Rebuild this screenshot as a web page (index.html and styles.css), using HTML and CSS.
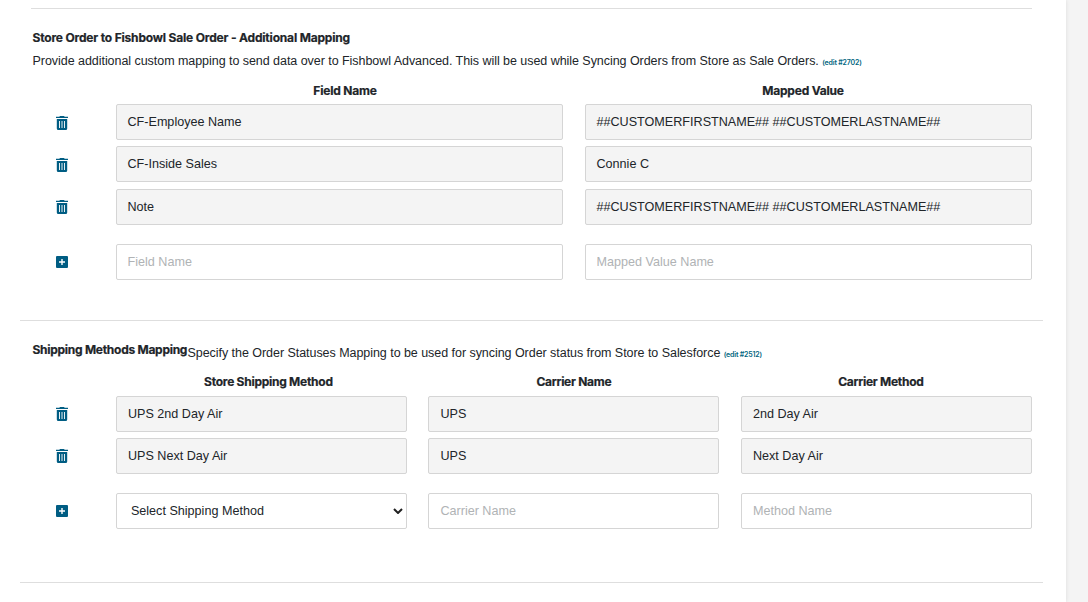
FILE: index.html
```html
<!DOCTYPE html>
<html lang="en">
<head>
<meta charset="utf-8">
<title>Mapping settings</title>
<link rel="stylesheet" href="styles.css">
</head>
<body>
<svg class="defs" width="0" height="0" aria-hidden="true">
  <symbol id="trash" viewBox="0 0 12 14">
    <path d="M4 0h4l.7.7H12V2H0V.7h3.300z"/>
    <path fill-rule="evenodd" d="M.8 3h10.400v9.500q0 1.500-1.500 1.500H2.300Q.8 14 .8 12.500zM3.100 5v7h.9V5zM5.550 5v7h.9V5zM8 5v7h.9V5z"/>
  </symbol>
  <symbol id="plus" viewBox="0 0 12 12">
    <path fill-rule="evenodd" d="M1 0h10q1 0 1 1v10q0 1-1 1H1q-1 0-1-1V1q0-1 1-1zM5.300 3v2.300H3v1.400h2.300V9h1.400V6.700H9V5.300H6.700V3z"/>
  </symbol>
</svg>
<main class="page">
  <section class="section order-section">
    <h2 class="title">Store Order to Fishbowl Sale Order - Additional Mapping</h2>
    <p class="description">Provide additional custom mapping to send data over to Fishbowl Advanced. This will be used while Syncing Orders from Store as Sale Orders. <a class="edit">(edit #2702)</a></p>
    <div class="row two head"><span></span><span class="nudge-right">Field Name</span><span class="nudge-left">Mapped Value</span></div>
    <div class="row two"><svg class="trash"><use href="#trash"/></svg><div class="field">CF-Employee Name</div><div class="field">##CUSTOMERFIRSTNAME## ##CUSTOMERLASTNAME##</div></div>
    <div class="row two"><svg class="trash"><use href="#trash"/></svg><div class="field">CF-Inside Sales</div><div class="field">Connie C</div></div>
    <div class="row two late"><svg class="trash"><use href="#trash"/></svg><div class="field">Note</div><div class="field">##CUSTOMERFIRSTNAME## ##CUSTOMERLASTNAME##</div></div>
    <div class="row two add"><svg class="plus"><use href="#plus"/></svg><input class="field" placeholder="Field Name"><input class="field" placeholder="Mapped Value Name"></div>
  </section>
  <section class="section shipping-section">
    <div class="intro"><h2 class="title">Shipping Methods Mapping</h2><p class="description">Specify the Order Statuses Mapping to be used for syncing Order status from Store to Salesforce <a class="edit">(edit #2512)</a></p></div>
    <div class="row three head"><span></span><span class="nudge-right">Store Shipping Method</span><span>Carrier Name</span><span class="nudge-left">Carrier Method</span></div>
    <div class="row three"><svg class="trash"><use href="#trash"/></svg><div class="field">UPS 2nd Day Air</div><div class="field">UPS</div><div class="field">2nd Day Air</div></div>
    <div class="row three"><svg class="trash"><use href="#trash"/></svg><div class="field">UPS Next Day Air</div><div class="field">UPS</div><div class="field">Next Day Air</div></div>
    <div class="row three add"><svg class="plus"><use href="#plus"/></svg><div class="field select">Select Shipping Method<svg class="chevron" viewBox="0 0 10 6"><path d="M1 1l4 4 4-4"/></svg></div><input class="field" placeholder="Carrier Name"><input class="field" placeholder="Method Name"></div>
  </section>
</main>
</body>
</html>
```
FILE: styles.css
```css
* { box-sizing: border-box; }
body {
  margin: 0;
  height: 602px;
  overflow: hidden;
  background: #f4f4f4;
  color: #212529;
  font-family: "Liberation Sans", Arial, sans-serif;
  font-size: 13px;
}
.defs { display: block; height: 0; }
.page {
  width: 1066px;
  height: 602px;
  padding: 8px 23px 0 20px;
  background: #fff;
  box-shadow: 0 0 4px rgba(0, 0, 0, .1);
}
.section { border-bottom: 1px solid #dedede; padding: 0 11px 0 12px; }
.order-section { height: 313px; }
.order-section::before {
  content: "";
  display: block;
  height: 1px;
  margin-left: -1px;
  background: #dedede;
}
.shipping-section { height: 262px; }
.title {
  margin: 0;
  padding-left: .5px;
  font: 700 12px/20px Inter, sans-serif;
  letter-spacing: -.18px;
  -webkit-text-stroke: .2px;
  white-space: nowrap;
}
.order-section .title { margin-top: 19px; }
.description {
  margin: 0;
  padding-left: .5px;
  font: 400 12.5px/20px "Liberation Sans", sans-serif;
  letter-spacing: -.045px;
  white-space: nowrap;
}
.order-section .description { margin-top: 3px; }
.edit { color: #006580; font: 600 7px/10px Inter, sans-serif; letter-spacing: -.18px; }
.intro { display: flex; padding-top: 19px; }
.intro .title { width: 155px; letter-spacing: -.27px; }
.intro .description { margin-top: 3px; }
.row { display: grid; align-items: center; height: 36px; margin-bottom: 6px; }
.two { grid-template-columns: 62px 447px 447px; column-gap: 22px; }
.three { grid-template-columns: 62.4px 291px 291px 291px; column-gap: 21.5px; }
.head {
  height: 20px;
  margin: 10px 0 3px;
  font: 700 12px/20px Inter, sans-serif;
  letter-spacing: -.2px;
  -webkit-text-stroke: .2px;
  text-align: center;
}
.shipping-section .head { margin: 9px 0 4px; letter-spacing: -.26px; }
.nudge-right { padding-left: 11px; }
.nudge-left { padding-right: 11px; }
.shipping-section .nudge-right { padding-left: 14px; }
.late { margin-top: 7px; }
.add { margin-top: 19px; }
.field {
  width: 100%;
  height: 36px;
  padding: 0 10.5px;
  border: 1px solid #d5d5d5;
  border-radius: 2px;
  background: #f4f4f4;
  color: #212529;
  font: 400 12.6px/35px "Liberation Sans", Arial, sans-serif;
  white-space: nowrap;
}
.three .field { padding-left: 11px; }
.add .field { background: #fff; }
input.field { outline: 0; padding-bottom: 0; }
.field::placeholder { color: #b0b3b5; opacity: 1; }
.trash, .plus { width: 12px; height: 14px; margin: 2px 0 0 24px; fill: #005d83; }
.late .trash, .shipping-section .trash { margin-top: 0; }
.plus { height: 12px; margin-top: 0; }
.three .select { display: flex; justify-content: space-between; align-items: center; padding: 0 3px 0 14px; }
.chevron { width: 10px; height: 6px; fill: none; stroke: #212121; stroke-width: 2; }
```
